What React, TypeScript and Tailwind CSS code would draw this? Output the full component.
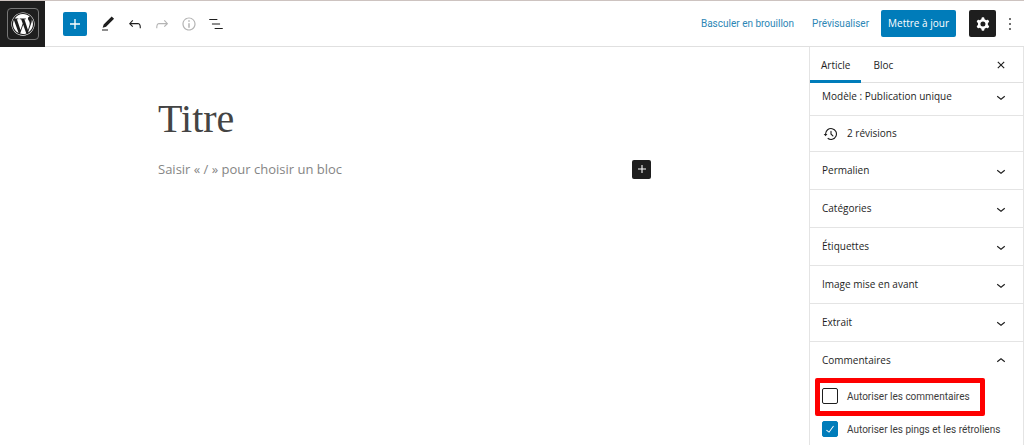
import React, { useState } from "react";
import { FaWordpress } from "react-icons/fa";

const paths = {
    plus: "M18 11.2h-5.2V6h-1.6v5.2H6v1.6h5.2V18h1.6v-5.2H18z",
    edit: "M20.1 5.1L16.9 2 6.2 12.7l-1.3 4.4 4.5-1.3L20.1 5.1zM4 20.8h8v-1.5H4v1.5z",
    undo: "M18.3 11.7c-.6-.6-1.4-.9-2.3-.9H6.7l2.9-3.3-1.1-1-4.5 5L8.5 16l1-1-2.7-2.7H16c.5 0 .9.2 1.3.5 1 1 1 3.4 1 4.5v.3h1.5v-.2c0-1.5 0-4.3-1.5-5.7z",
    redo: "M15.6 6.5l-1.1 1 2.9 3.3H8c-.9 0-1.7.3-2.3.9-1.4 1.5-1.4 4.2-1.4 5.6v.2h1.5v-.3c0-1.1 0-3.5 1-4.5.3-.3.7-.5 1.3-.5h9.2L14.5 15l1.1 1.1 4.6-4.6-4.6-5z",
    info: "M12 3.2c-4.8 0-8.8 3.9-8.8 8.8 0 4.8 3.9 8.8 8.8 8.8 4.8 0 8.8-3.9 8.8-8.8 0-4.8-4-8.8-8.8-8.8zm0 16c-4 0-7.2-3.3-7.2-7.2C4.8 8 8 4.8 12 4.8s7.2 3.3 7.2 7.2c0 4-3.2 7.2-7.2 7.2zM11 17h2v-6h-2v6zm0-8h2V7h-2v2z",
    listView: "M13.8 5.2H3v1.5h10.8V5.2zm-3.6 12v1.5H21v-1.5H10.2zm7.2-6H6.6v1.5h10.8v-1.5z",
    cog: "M10.289 4.836A1 1 0 0111.275 4h1.306a1 1 0 01.987.836l.244 1.466c.787.26 1.503.679 2.108 1.218l1.393-.522a1 1 0 011.216.437l.653 1.13a1 1 0 01-.23 1.273l-1.148.944a6.025 6.025 0 010 2.435l1.149.946a1 1 0 01.23 1.272l-.653 1.13a1 1 0 01-1.216.437l-1.394-.522c-.605.54-1.32.958-2.108 1.218l-.244 1.466a1 1 0 01-.987.836h-1.306a1 1 0 01-.986-.836l-.244-1.466a5.995 5.995 0 01-2.108-1.218l-1.394.522a1 1 0 01-1.217-.436l-.653-1.131a1 1 0 01.23-1.272l1.149-.946a6.026 6.026 0 010-2.435l-1.148-.944a1 1 0 01-.23-1.272l.653-1.131a1 1 0 011.217-.437l1.393.522a5.994 5.994 0 012.108-1.218l.244-1.466zM14.929 12a3 3 0 11-6 0 3 3 0 016 0z",
    more: "M13 19h-2v-2h2v2zm0-6h-2v-2h2v2zm0-6h-2V5h2v2z",
    close: "M12 13.06l3.712 3.713 1.061-1.06L13.061 12l3.712-3.712-1.06-1.06L12 10.938 8.288 7.227l-1.061 1.06L10.939 12l-3.712 3.712 1.06 1.061L12 13.061z",
    down: "M17.5 11.6L12 16l-5.5-4.4.9-1.2L12 14l4.5-3.6 1 1.2z",
    up: "M6.5 12.4L12 8l5.5 4.4-.9 1.2L12 10l-4.5 3.6-1-1.2z",
    history: "M5.5 12h1.75l-2.5 3-2.5-3H4a8 8 0 113.134 6.35l.907-1.194A6.5 6.5 0 105.5 12zm9.53 1.97l-2.28-2.28V8.5a.75.75 0 00-1.5 0V12a.747.747 0 00.218.529l1.282-.84-1.28.842 2.5 2.5a.75.75 0 101.06-1.061z",
    check: "M16.7 7.1l-6.3 8.5-3.3-2.5-.9 1.2 4.5 3.4L17.9 8z",
};

type IconName = keyof typeof paths;

const Icon = ({ name, className = "size-5" }: { name: IconName; className?: string }) => (
    <svg viewBox="0 0 24 24" fill="currentColor" fillRule="evenodd" aria-hidden="true" className={`shrink-0 ${className}`}>
        <path d={paths[name]} />
    </svg>
);

const tools: { name: IconName; label: string; disabled?: boolean }[] = [
    { name: "edit", label: "Outils" },
    { name: "undo", label: "Annuler" },
    { name: "redo", label: "Rétablir", disabled: true },
    { name: "info", label: "Détails", disabled: true },
    { name: "listView", label: "Vue en liste" },
];

const panels = ["Permalien", "Catégories", "Étiquettes", "Image mise en avant", "Extrait"];

const Header = () => (
    <header className="flex h-[47px] items-center border-t border-b border-t-[#cdc3c0] border-b-[#e0e0e0]">
        <a href="#" aria-label="Voir les articles" className="-mb-px flex w-[45px] items-center justify-center self-stretch bg-[#1e1e1e] text-white">
            <span className="flex size-8 items-center justify-center rounded-sm border border-[#777777]">
                <FaWordpress className="size-6" />
            </span>
        </a>
        <button aria-label="Ajouter un bloc" className="mr-[7px] ml-[18px] flex size-6 items-center justify-center rounded-xs bg-[#007cba] text-white">
            <Icon name="plus" className="size-5" />
        </button>
        {tools.map((tool) => (
            <button
                key={tool.name}
                aria-label={tool.label}
                disabled={tool.disabled}
                className="flex h-7 w-[27px] items-center justify-center text-[#1e1e1e] disabled:text-[#b4b4b4]"
            >
                <Icon name={tool.name} className="size-[18px]" />
            </button>
        ))}
        <div className="ml-auto flex items-center pr-1 text-[10px]">
            <button className="mr-[18px] font-['Roboto','Open_Sans',sans-serif] text-[#2c86b5]">Basculer en brouillon</button>
            <button className="mr-3 font-['Roboto','Open_Sans',sans-serif] text-[#2c86b5]">Prévisualiser</button>
            <button className="mr-[13px] h-[27px] rounded-xs bg-[#007cba] px-[7px] font-medium text-white">Mettre à jour</button>
            <button aria-label="Réglages" className="mr-1 flex size-[27px] items-center justify-center rounded-xs bg-[#1e1e1e] text-white">
                <Icon name="cog" className="size-5" />
            </button>
            <button aria-label="Options" className="flex h-7 w-5 items-center justify-center text-[#1e1e1e]">
                <Icon name="more" className="size-5" />
            </button>
        </div>
    </header>
);

const Editor = () => (
    <main className="min-w-0 flex-1">
        <div className="mx-auto max-w-[493px] pt-12">
            <h1 className="font-['Liberation_Serif',serif] text-[40px] leading-12 text-[#444444]">Titre</h1>
            <div className="mt-4 flex items-center justify-between">
                <input
                    type="text"
                    aria-label="Bloc vide"
                    placeholder="Saisir « / » pour choisir un bloc"
                    className="min-w-0 flex-1 text-[13px] leading-5 outline-none placeholder:text-[#858585]"
                />
                <button aria-label="Ajouter un bloc" className="flex size-[19px] items-center justify-center rounded-xs bg-[#1e1e1e] text-white">
                    <Icon name="plus" className="size-4" />
                </button>
            </div>
        </div>
    </main>
);

const PanelTitle = ({ title, open = false }: { title: string; open?: boolean }) => (
    <button aria-expanded={open} className="flex h-[37px] w-full shrink-0 items-center justify-between pr-[13px] pl-3 font-medium">
        {title}
        <Icon name={open ? "up" : "down"} className="size-[18px]" />
    </button>
);

type CheckProps = {
    label: string;
    checked: boolean;
    onChange: (value: boolean) => void;
};

const Check = ({ label, checked, onChange }: CheckProps) => (
    <label className="flex items-center gap-[9px] font-['Roboto','Open_Sans',sans-serif] text-[#3c3c3c]">
        <span className="grid size-4 shrink-0">
            <input
                type="checkbox"
                checked={checked}
                onChange={(e) => onChange(e.target.checked)}
                className="col-start-1 row-start-1 size-4 appearance-none rounded-xs border border-[#1e1e1e] bg-white checked:border-[#007cba] checked:bg-[#007cba]"
            />
            {checked && <Icon name="check" className="pointer-events-none col-start-1 row-start-1 size-4 text-white" />}
        </span>
        {label}
    </label>
);

const Sidebar = () => {
    const [comments, setComments] = useState(false);
    const [pings, setPings] = useState(true);

    return (
        <aside className="w-[215px] shrink-0 border-r border-l border-[#e4e4e4] text-[10px] text-[#1e1e1e]">
            <div className="flex h-9 items-stretch border-b border-[#e0e0e0] font-medium">
                <button className="-mb-px border-b-3 border-[#007cba] px-[11px] pt-[3px]">Article</button>
                <button className="border-b-2 border-transparent px-3 pt-[3px]">Bloc</button>
                <button aria-label="Fermer les réglages" className="ml-auto pr-[13px]">
                    <Icon name="close" className="size-[18px]" />
                </button>
            </div>
            <div className="flex h-8 flex-col justify-end overflow-hidden">
                <PanelTitle title="Modèle : Publication unique" />
            </div>
            <div className="border-y border-[#e4e4e4]">
                <button className="flex h-[35px] items-center gap-[7px] px-3 font-medium">
                    <Icon name="history" className="size-[18px]" />
                    2 révisions
                </button>
            </div>
            {panels.map((title) => (
                <div key={title} className="border-b border-[#e4e4e4]">
                    <PanelTitle title={title} />
                </div>
            ))}
            <PanelTitle title="Commentaires" open />
            <div className="flex flex-col gap-[17px] px-3 pt-[9px] pb-2">
                <div className="relative">
                    <Check label="Autoriser les commentaires" checked={comments} onChange={setComments} />
                    <div className="pointer-events-none absolute -top-[10px] right-[26px] -bottom-3 -left-[7px] rounded-xs border-5 border-[#fe0000]" />
                </div>
                <Check label="Autoriser les pings et les rétroliens" checked={pings} onChange={setPings} />
            </div>
        </aside>
    );
};

const App = () => (
    <div className="flex min-h-screen flex-col bg-white font-['Open_Sans','Noto_Sans',sans-serif]">
        <Header />
        <div className="flex flex-1">
            <Editor />
            <Sidebar />
        </div>
    </div>
);

export default App;
